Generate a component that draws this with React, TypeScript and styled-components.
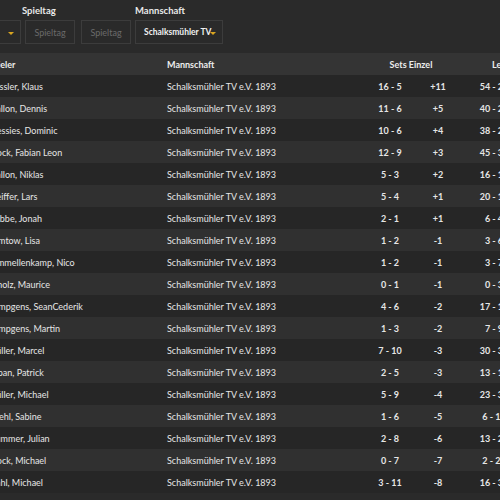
import React from "react";
import styled, { createGlobalStyle } from "styled-components";

const GlobalStyle = createGlobalStyle`
  html, body { margin: 0; padding: 0; background: #2a2a2a; }
  body { font-family: Lato, "Open Sans", sans-serif; color: #e6e6e6; overflow: hidden; }
`;

const Page = styled.div`
  width: 800px;
  margin-left: -99px;
  padding-top: 5px;
`;

const FilterBar = styled.div`
  display: flex;
  align-items: flex-end;
  gap: 1px;
`;

const FilterGroup = styled.div<{ $inset?: number }>`
  display: flex;
  flex-direction: column;
  gap: 3px;
  padding-left: ${(p) => p.$inset ?? 0}px;
`;

const FilterLabel = styled.div<{ $pull?: number }>`
  font-size: 9.5px;
  font-weight: 700;
  color: #e8e8e8;
  height: 12px;
  line-height: 12px;
  margin-left: ${(p) => -(p.$pull ?? 0)}px;
`;

const FilterRow = styled.div`
  display: flex;
  gap: 6px;
`;

const Box = styled.div<{ $w: number; $active?: boolean }>`
  box-sizing: border-box;
  width: ${(p) => p.$w}px;
  height: 24px;
  border: 1px solid #3c3c3c;
  background: #2a2a2a;
  display: flex;
  align-items: center;
  justify-content: ${(p) => (p.$active ? "flex-start" : "center")};
  padding-left: ${(p) => (p.$active ? "8px" : "0")};
  position: relative;
  font-size: ${(p) => (p.$active ? "8.5px" : "9px")};
  font-weight: ${(p) => (p.$active ? 700 : 400)};
  color: ${(p) => (p.$active ? "#f0f0f0" : "#6a6a6a")};
  white-space: nowrap;
`;

const Arrow = styled.span`
  position: absolute;
  right: 6px;
  top: 11px;
  width: 0;
  height: 0;
  border-left: 3px solid transparent;
  border-right: 3px solid transparent;
  border-top: 3px solid #d9a520;
`;

const TableWrap = styled.div`
  margin-left: 79px;
  margin-top: 9px;
`;

const Table = styled.table`
  border-collapse: collapse;
  table-layout: fixed;
  width: 589px;
  font-size: 9px;
`;

const HeadRow = styled.tr`
  background: #343434;
`;

const Th = styled.th<{ $align?: string }>`
  height: 22px;
  padding: 0 8px;
  font-weight: 700;
  text-align: ${(p) => p.$align || "left"};
  color: #ececec;
  white-space: nowrap;
`;

const Row = styled.tr<{ $alt: boolean }>`
  background: ${(p) => (p.$alt ? "#303030" : "#262626")};
`;

const Td = styled.td<{ $num?: boolean }>`
  height: 22px;
  padding: 0 8px;
  white-space: nowrap;
  overflow: hidden;
  text-align: ${(p) => (p.$num ? "center" : "left")};
  font-weight: ${(p) => (p.$num ? 700 : 400)};
  color: #e6e6e6;
`;

type P = [string, string, string, string, string];
const rows: P[] = [
  ["Hessler, Klaus", "16 - 5", "+11", "54 - 25", "+29"],
  ["Mallon, Dennis", "11 - 6", "+5", "40 - 27", "+13"],
  ["Wessies, Dominic", "10 - 6", "+4", "38 - 26", "+12"],
  ["Brock, Fabian Leon", "12 - 9", "+3", "45 - 38", "+7"],
  ["Mallon, Niklas", "5 - 3", "+2", "16 - 13", "+3"],
  ["Pfeiffer, Lars", "5 - 4", "+1", "20 - 17", "+3"],
  ["Hubbe, Jonah", "2 - 1", "+1", "6 - 4", "+2"],
  ["Ramtow, Lisa", "1 - 2", "-1", "3 - 6", "-3"],
  ["Himmellenkamp, Nico", "1 - 2", "-1", "3 - 7", "-4"],
  ["Scholz, Maurice", "0 - 1", "-1", "0 - 3", "-3"],
  ["Kempgens, SeanCederik", "4 - 6", "-2", "17 - 19", "-2"],
  ["Kempgens, Martin", "1 - 3", "-2", "7 - 9", "-2"],
  ["Müller, Marcel", "7 - 10", "-3", "30 - 34", "-4"],
  ["Urban, Patrick", "2 - 5", "-3", "13 - 16", "-3"],
  ["Müller, Michael", "5 - 9", "-4", "23 - 31", "-8"],
  ["Strehl, Sabine", "1 - 6", "-5", "6 - 18", "-12"],
  ["Trummer, Julian", "2 - 8", "-6", "13 - 24", "-11"],
  ["Brock, Michael", "0 - 7", "-7", "2 - 21", "-19"],
  ["Stahl, Michael", "3 - 11", "-8", "16 - 35", "-19"],
];

export default function App() {
  return (
    <>
      <GlobalStyle />
      <Page>
        <FilterBar>
          <FilterGroup>
            <FilterLabel>Saison</FilterLabel>
            <Box $w={120} $active>
              2023/24
              <Arrow />
            </Box>
          </FilterGroup>
          <FilterGroup $inset={3}>
            <FilterLabel $pull={3}>Spieltag</FilterLabel>
            <FilterRow>
              <Box $w={50}>Spieltag</Box>
              <Box $w={50}>Spieltag</Box>
            </FilterRow>
          </FilterGroup>
          <FilterGroup $inset={3}>
            <FilterLabel>Mannschaft</FilterLabel>
            <Box $w={88} $active>
              Schalksmühler TV
              <Arrow />
            </Box>
          </FilterGroup>
        </FilterBar>
        <TableWrap>
          <Table>
            <colgroup>
              <col style={{ width: 179 }} />
              <col style={{ width: 204 }} />
              <col style={{ width: 54 }} />
              <col style={{ width: 42 }} />
              <col style={{ width: 70 }} />
              <col style={{ width: 40 }} />
            </colgroup>
            <thead>
              <HeadRow>
                <Th>Spieler</Th>
                <Th>Mannschaft</Th>
                <Th colSpan={2} $align="center">Sets Einzel</Th>
                <Th colSpan={2} $align="center">Legs Einzel</Th>
              </HeadRow>
            </thead>
            <tbody>
              {rows.map((r, i) => (
                <Row key={i} $alt={i % 2 === 1}>
                  <Td>{r[0]}</Td>
                  <Td>Schalksmühler TV e.V. 1893</Td>
                  <Td $num>{r[1]}</Td>
                  <Td $num>{r[2]}</Td>
                  <Td $num>{r[3]}</Td>
                  <Td $num>{r[4]}</Td>
                </Row>
              ))}
            </tbody>
          </Table>
        </TableWrap>
      </Page>
    </>
  );
}
